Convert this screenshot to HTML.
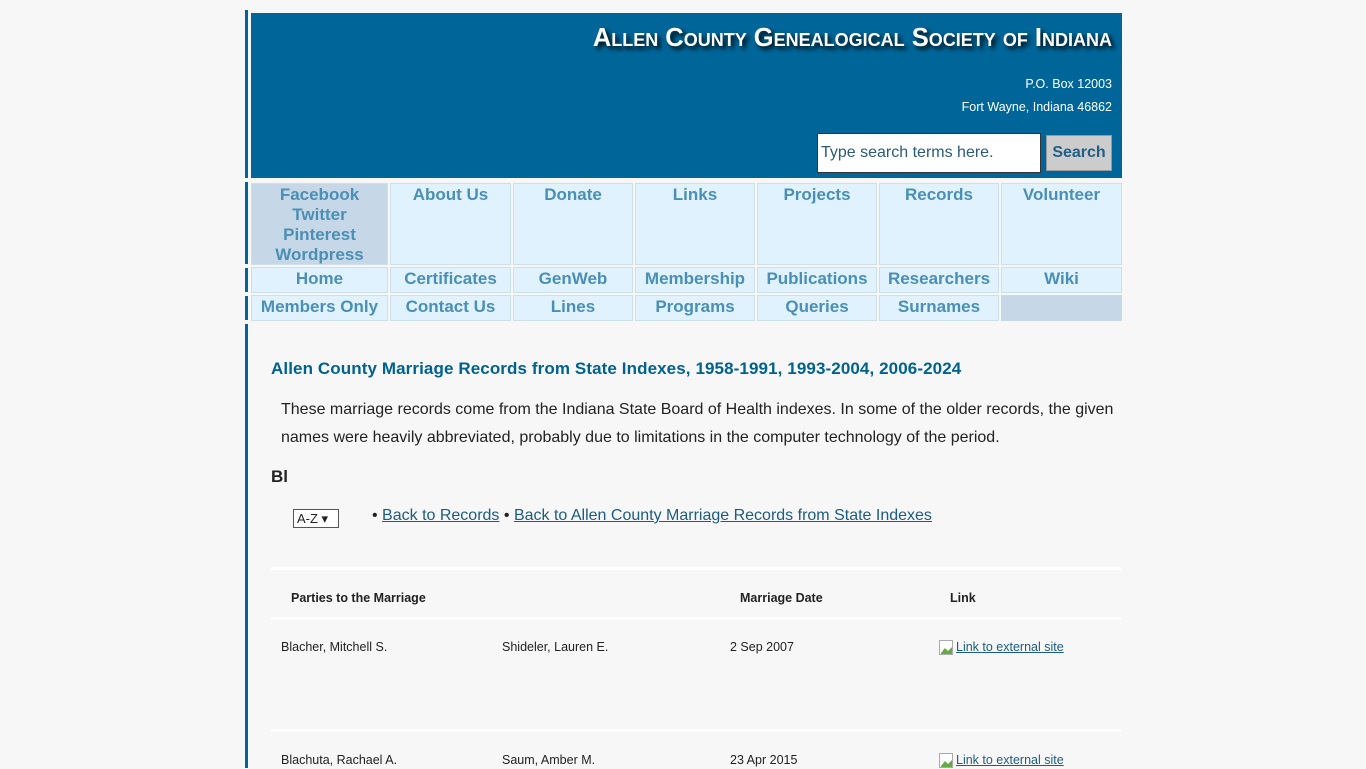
<!DOCTYPE html>
<html><head><meta charset="utf-8"><style>
*{margin:0;padding:0;box-sizing:border-box}
body{width:1366px;height:768px;overflow:hidden;background:#f7f7f7;font-family:"Liberation Sans",sans-serif;position:relative;color:#222}
.a{position:absolute}
.bar{position:absolute;left:245px;width:3px;background:#006699}
#hdr{left:251px;top:13px;width:871px;height:165px;background:#006699}
.title{right:10px;top:11px;color:#fff;font-family:"Liberation Sans",sans-serif;font-weight:bold;font-size:25.5px;font-variant:small-caps;text-shadow:3px 3px 5px #000;white-space:nowrap}
.addr{right:10px;color:#fff;font-size:12.5px;white-space:nowrap}
.inp{left:566px;top:120px;width:224px;height:40px;background:#fff;border:1px solid #333;font-size:16px;color:#2a5b7a;padding:10px 3px}
.btn{left:795px;top:122px;width:66px;height:36px;background:#ccc;border:1px solid #999;color:#1f5e86;font-weight:bold;font-size:16px;text-align:center;line-height:34px}
.c{position:absolute;background:#dff2fd;border:1px solid #cde0ea;color:#4a8fb5;font-weight:bold;font-size:17px;text-align:center;padding-top:1px;white-space:nowrap}
.soc{background:#c6d8e8;color:#4a8fb5;line-height:20px;font-size:17px}
h1{position:absolute;left:271px;top:359px;font-size:17px;color:#00628f;font-weight:bold;white-space:nowrap;letter-spacing:0.1px}
.p{left:281px;top:396px;width:840px;font-size:16px;line-height:28px;color:#222}
.sm{font-size:12.5px;color:#222;white-space:nowrap}
a{color:#1b5c82;text-decoration:underline}
.hl{position:absolute;left:271px;width:850px;height:3px;background:#fff}
</style></head><body>
<div class="bar" style="top:10px;height:168px"></div>
<div class="bar" style="top:182px;height:82px"></div>
<div class="bar" style="top:268px;height:24px"></div>
<div class="bar" style="top:296px;height:24px"></div>
<div class="bar" style="top:324px;height:444px"></div>
<div id="hdr" class="a">
<div class="a title">Allen County Genealogical Society of Indiana</div>
<div class="a addr" style="top:64px">P.O. Box 12003</div>
<div class="a addr" style="top:87px">Fort Wayne, Indiana 46862</div>
<div class="a inp">Type search terms here.</div>
<div class="a btn">Search</div>
</div>
<div class="c soc" style="left:251px;top:183px;width:137px;height:82px">Facebook<br>Twitter<br>Pinterest<br>Wordpress</div>
<div class="c" style="left:390px;top:183px;width:121px;height:82px">About Us</div>
<div class="c" style="left:513px;top:183px;width:120px;height:82px">Donate</div>
<div class="c" style="left:635px;top:183px;width:120px;height:82px">Links</div>
<div class="c" style="left:757px;top:183px;width:120px;height:82px">Projects</div>
<div class="c" style="left:879px;top:183px;width:120px;height:82px">Records</div>
<div class="c" style="left:1001px;top:183px;width:121px;height:82px">Volunteer</div>
<div class="c" style="left:251px;top:267px;width:137px;height:26px">Home</div>
<div class="c" style="left:390px;top:267px;width:121px;height:26px">Certificates</div>
<div class="c" style="left:513px;top:267px;width:120px;height:26px">GenWeb</div>
<div class="c" style="left:635px;top:267px;width:120px;height:26px">Membership</div>
<div class="c" style="left:757px;top:267px;width:120px;height:26px">Publications</div>
<div class="c" style="left:879px;top:267px;width:120px;height:26px">Researchers</div>
<div class="c" style="left:1001px;top:267px;width:121px;height:26px">Wiki</div>
<div class="c" style="left:251px;top:295px;width:137px;height:26px">Members Only</div>
<div class="c" style="left:390px;top:295px;width:121px;height:26px">Contact Us</div>
<div class="c" style="left:513px;top:295px;width:120px;height:26px">Lines</div>
<div class="c" style="left:635px;top:295px;width:120px;height:26px">Programs</div>
<div class="c" style="left:757px;top:295px;width:120px;height:26px">Queries</div>
<div class="c" style="left:879px;top:295px;width:120px;height:26px">Surnames</div>
<div class="c" style="left:1001px;top:295px;width:121px;height:26px;background:#c6d8e8;border-color:#c6d8e8"></div>
<h1>Allen County Marriage Records from State Indexes, 1958-1991, 1993-2004, 2006-2024</h1>
<div class="a p">These marriage records come from the Indiana State Board of Health indexes. In some of the older records, the given names were heavily abbreviated, probably due to limitations in the computer technology of the period.</div>
<div class="a" style="left:271px;top:467px;font-weight:bold;font-size:17px">Bl</div>
<div class="a" style="left:293px;top:509px;width:46px;height:19px;border:1px solid #555;background:#fff;font-size:13px;padding-left:3px;line-height:17px">A-Z ▾</div>
<div class="a" style="left:372px;top:507px;font-size:16px;white-space:nowrap">• <a>Back to Records</a> • <a>Back to Allen County Marriage Records from State Indexes</a></div>
<div class="hl" style="top:567px"></div>
<div class="hl" style="top:617px"></div>
<div class="hl" style="top:729px"></div>
<div class="a sm" style="left:291px;top:591px;font-weight:bold">Parties to the Marriage</div>
<div class="a sm" style="left:740px;top:591px;font-weight:bold">Marriage Date</div>
<div class="a sm" style="left:950px;top:591px;font-weight:bold">Link</div>
<div class="a sm" style="left:281px;top:640px">Blacher, Mitchell S.</div>
<div class="a sm" style="left:502px;top:640px">Shideler, Lauren E.</div>
<div class="a sm" style="left:730px;top:640px">2 Sep 2007</div>
<svg class="a" style="left:939px;top:640px" width="16" height="16"><rect x="0.5" y="0.5" width="13" height="14" fill="#fff" stroke="#aaa"/><path d="M2 13 L6 8 L9 11 L13 7 L13 14 L2 14Z" fill="#6a4"/></svg>
<div class="a sm" style="left:956px;top:640px"><a>Link to external site</a></div>
<div class="a sm" style="left:281px;top:753px">Blachuta, Rachael A.</div>
<div class="a sm" style="left:502px;top:753px">Saum, Amber M.</div>
<div class="a sm" style="left:730px;top:753px">23 Apr 2015</div>
<svg class="a" style="left:939px;top:753px" width="16" height="16"><rect x="0.5" y="0.5" width="13" height="14" fill="#fff" stroke="#aaa"/><path d="M2 13 L6 8 L9 11 L13 7 L13 14 L2 14Z" fill="#6a4"/></svg>
<div class="a sm" style="left:956px;top:753px"><a>Link to external site</a></div>
</body></html>
